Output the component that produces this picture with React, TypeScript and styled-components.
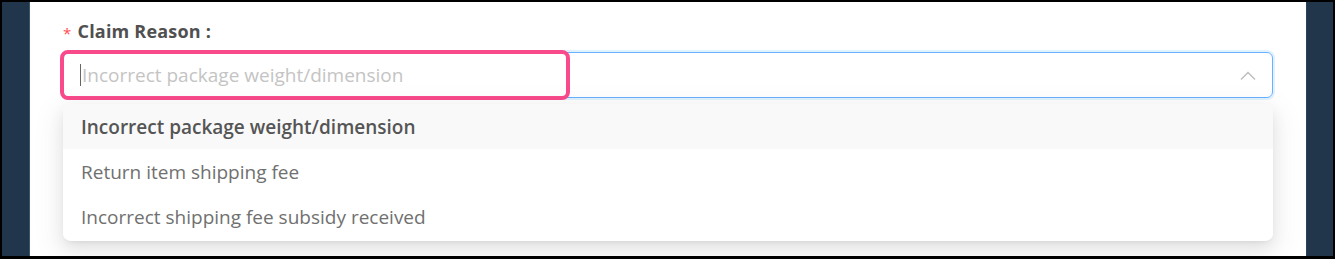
import { createGlobalStyle, styled } from "styled-components";

const GlobalStyle = createGlobalStyle`
  html, body {
    margin: 0;
    padding: 0;
    background: #000;
  }
  * {
    box-sizing: border-box;
  }
`;

const Frame = styled.div`
  width: 1335px;
  height: 259px;
  border-top: 2px solid #000;
  border-left: 2px solid #000;
  border-right: 2px solid #000;
  border-bottom: 3px solid #000;
  display: flex;
  background: #fff;
  font-family: "Open Sans", "Noto Sans", sans-serif;
`;

const SideBar = styled.div<{ $edge: "left" | "right" }>`
  width: ${(p) => (p.$edge === "left" ? "28px" : "27px")};
  background: #21364a;
  ${(p) => (p.$edge === "left" ? "border-right: 1px solid #3a5569;" : "border-left: 1px solid #2c4256;")}
  flex-shrink: 0;
`;

const Main = styled.div`
  flex: 1;
  padding: 17px 33px 0 33px;
  position: relative;
`;

const Label = styled.div`
  display: flex;
  align-items: center;
  height: 24px;
  font-size: 18px;
  font-weight: 700;
  color: #505050;
  letter-spacing: 0.2px;
`;

const Required = styled.span`
  color: #ff4d4f;
  font-size: 15px;
  font-weight: 400;
  margin-right: 6px;
  position: relative;
  top: 2px;
`;

const Colon = styled.span`
  margin-left: 5px;
`;

const Field = styled.div`
  position: relative;
  margin-top: 9px;
`;

const SelectBox = styled.div`
  height: 46px;
  border: 1px solid #69b1ff;
  border-radius: 6px;
  box-shadow: 0 0 0 2px rgba(5, 145, 255, 0.12);
  display: flex;
  align-items: center;
  padding: 0 16px 0 16px;
`;

const Caret = styled.span`
  width: 1px;
  height: 22px;
  background: #666;
  margin-right: 1px;
`;

const Placeholder = styled.span`
  flex: 1;
  font-size: 19px;
  color: #c4c4c4;
`;

const Highlight = styled.div`
  position: absolute;
  left: -3px;
  top: -2px;
  width: 510px;
  height: 50px;
  border: 4px solid #f94a8b;
  border-radius: 8px;
  pointer-events: none;
`;

const Menu = styled.ul`
  position: absolute;
  left: 0;
  right: 0;
  top: 52px;
  margin: 0;
  padding: 0 0 2px;
  list-style: none;
  background: #fff;
  border-radius: 8px;
  box-shadow: 0 6px 16px 0 rgba(0, 0, 0, 0.08), 0 3px 6px -4px rgba(0, 0, 0, 0.12),
    0 9px 28px 8px rgba(0, 0, 0, 0.05);
  overflow: hidden;
`;

const Option = styled.li<{ $active?: boolean }>`
  height: 45px;
  display: flex;
  align-items: center;
  padding: 0 18px;
  font-size: 19px;
  color: ${(p) => (p.$active ? "#555" : "#707070")};
  font-weight: ${(p) => (p.$active ? 600 : 400)};
  background: ${(p) => (p.$active ? "#f9f9f9" : "#fff")};
`;

const options = [
  "Incorrect package weight/dimension",
  "Return item shipping fee",
  "Incorrect shipping fee subsidy received",
];

function ChevronUp() {
  return (
    <svg width="16" height="9" viewBox="0 0 16 9" fill="none">
      <polyline points="1,8.5 8,1.5 15,8.5" stroke="#bcbcbc" strokeWidth="1.4" />
    </svg>
  );
}

function App() {
  return (
    <>
      <GlobalStyle />
      <Frame>
        <SideBar $edge="left" />
        <Main>
          <Label>
            <Required>*</Required>
            Claim Reason<Colon>:</Colon>
          </Label>
          <Field>
            <SelectBox>
              <Caret />
              <Placeholder>Incorrect package weight/dimension</Placeholder>
              <ChevronUp />
            </SelectBox>
            <Highlight />
            <Menu>
              {options.map((o, i) => (
                <Option key={o} $active={i === 0}>
                  {o}
                </Option>
              ))}
            </Menu>
          </Field>
        </Main>
        <SideBar $edge="right" />
      </Frame>
    </>
  );
}

export default App;
